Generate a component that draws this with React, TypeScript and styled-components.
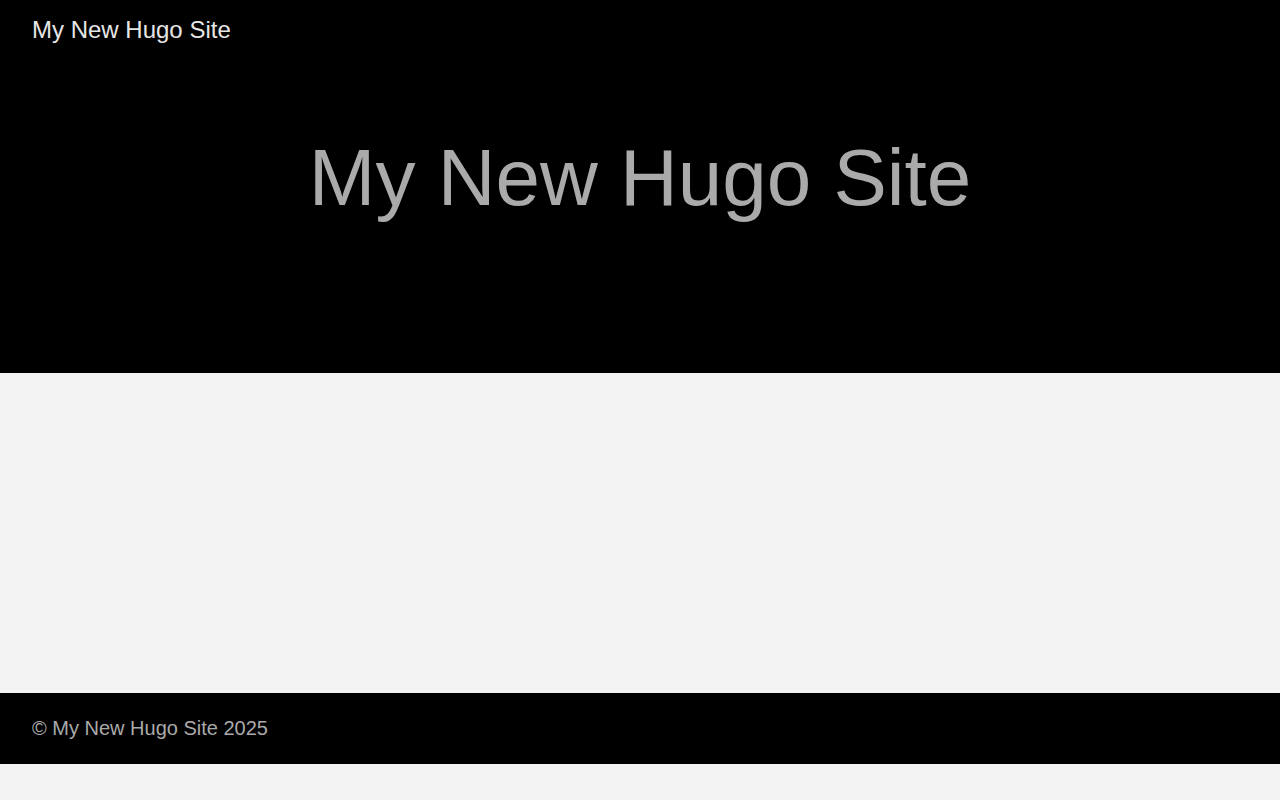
import React from 'react';
import styled, { createGlobalStyle } from 'styled-components';

const GlobalStyle = createGlobalStyle`
  html, body {
    margin: 0;
    padding: 0;
    background: #f3f3f3;
    font-family: 'Liberation Sans', Arial, sans-serif;
  }
`;

const App: React.FC = () => {
  return (
    <>
      <GlobalStyle />
      <Header>
        <Nav>
          <Brand href="#">My New Hugo Site</Brand>
        </Nav>
        <Hero>
          <HeroTitle>My New Hugo Site</HeroTitle>
        </Hero>
      </Header>
      <Main />
      <Footer>
        <FooterText>© My New Hugo Site 2025</FooterText>
      </Footer>
    </>
  );
};

export default App;

const Header = styled.header`
  background: #000000;
  height: 373px;
  display: flex;
  flex-direction: column;
`;

const Nav = styled.nav`
  padding: 16px 32px;
  display: flex;
  align-items: center;
`;

const Brand = styled.a`
  color: #e6e6e6;
  font-size: 24px;
  line-height: 28px;
  text-decoration: none;
`;

const Hero = styled.div`
  padding-top: 72px;
  text-align: center;
`;

const HeroTitle = styled.h1`
  margin: 0;
  color: #aaaaaa;
  font-size: 80px;
  font-weight: 400;
  line-height: 92px;
`;

const Main = styled.main`
  height: 320px;
  background: #f3f3f3;
`;

const Footer = styled.footer`
  background: #000000;
  padding: 24px 32px;
`;

const FooterText = styled.p`
  margin: 0;
  color: #aaaaaa;
  font-size: 20px;
  line-height: 23px;
`;
